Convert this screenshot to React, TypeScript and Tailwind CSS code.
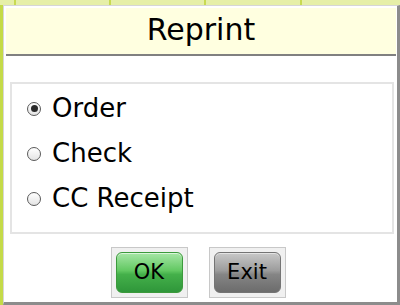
import React, { useState } from "react";

const options = ["Order", "Check", "CC Receipt"];

function Radio({ checked }: { checked: boolean }) {
  return (
    <span className="flex h-[14px] w-[14px] items-center justify-center rounded-full border border-[#5a5a5a] bg-[linear-gradient(to_bottom,#ffffff,#e4e4e4)]">
      {checked && <span className="h-[7px] w-[7px] rounded-full bg-[#2a2a2a]" />}
    </span>
  );
}

export default function App() {
  const [selected, setSelected] = useState("Order");

  return (
    <div className="flex h-[305px] w-[400px] flex-col overflow-hidden bg-[#dfe99a] font-['DejaVu_Sans',sans-serif] text-black">
      {/* background tiles peeking out behind the dialog */}
      <div className="flex h-[5px] shrink-0">
        <div className="w-[16px] border-r-2 border-[#c8da52] bg-[#e6efa8]" />
        <div className="w-[95px] border-r-2 border-[#c8da52] bg-[#e6efa8]" />
        <div className="w-[95px] border-r-2 border-[#c8da52] bg-[#e6efa8]" />
        <div className="w-[96px] border-r-2 border-[#c8da52] bg-[#e6efa8]" />
        <div className="flex-1 bg-[#e6efa8]" />
      </div>
      <div className="flex flex-1">
        <div className="w-[3px] bg-[#c4da48]" />
        <div className="flex flex-1 flex-col border-b-[3px] border-l border-r-[3px] border-t border-b-[#8c8c8c] border-l-[#d6d6d6] border-r-[#8c8c8c] border-t-[#d6d6d6] bg-white pl-[2px] pr-px pt-[2px]">
          <div className="flex h-[48px] shrink-0 items-center justify-center border-b-2 border-[#808080] bg-[#ffffe0] pb-[2px] text-[30px] leading-none">
            Reprint
          </div>
          <div className="ml-[4px] mr-[2px] mt-[26px] h-[152px] border-2 border-[#e4e4e4] pb-[11px] pl-[15px] pt-[2px]">
            {options.map((o) => (
              <label
                key={o}
                className="flex h-[45px] cursor-pointer items-center gap-[11px] text-[26px] leading-[45px]"
                onClick={() => setSelected(o)}
              >
                <Radio checked={selected === o} />
                <span>{o}</span>
              </label>
            ))}
          </div>
          <div className="mt-[13px] flex justify-center gap-[21px] pr-[6px]">
            <div className="h-[51px] w-[77px] border border-[#c8c8c8] bg-[#f0f0f0] p-[4px]">
              <button className="flex h-full w-full items-center justify-center rounded-[6px] border border-[#3c9a3c] bg-[linear-gradient(to_bottom,#a6e6a6_0%,#62c862_45%,#44b04a_55%,#2f963a_100%)] text-[21px] leading-none shadow-[inset_0_1px_0_rgba(255,255,255,0.6)]">
                OK
              </button>
            </div>
            <div className="h-[51px] w-[77px] border border-[#c8c8c8] bg-[#f0f0f0] p-[4px]">
              <button className="flex h-full w-full items-center justify-center rounded-[6px] border border-[#747474] bg-[linear-gradient(to_bottom,#c8c8c8_0%,#9c9c9c_45%,#858585_55%,#6c6c6c_100%)] text-[21px] leading-none shadow-[inset_0_1px_0_rgba(255,255,255,0.5)]">
                Exit
              </button>
            </div>
          </div>
        </div>
      </div>
    </div>
  );
}
